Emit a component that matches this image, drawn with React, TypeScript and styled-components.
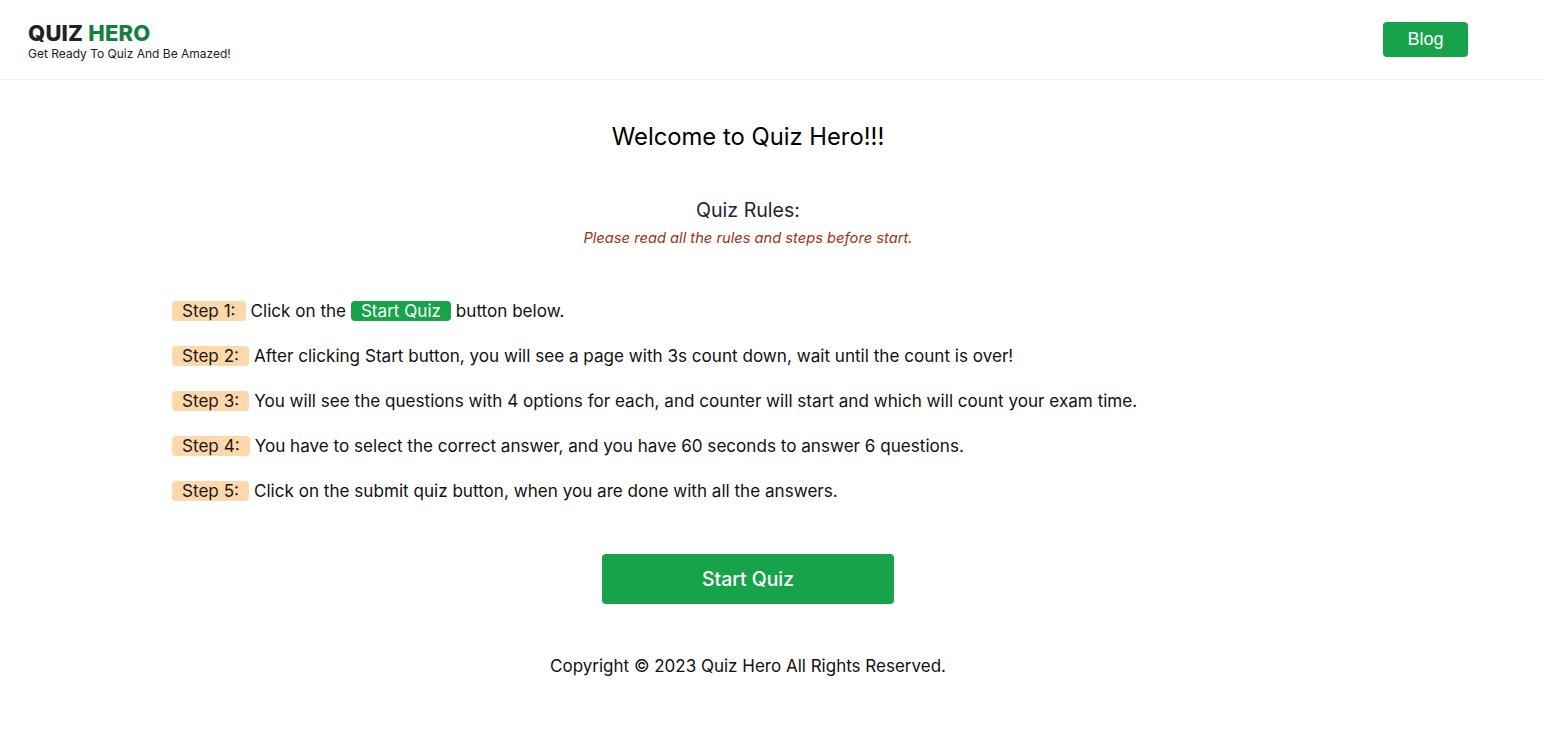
import React from "react";
import styled, { createGlobalStyle } from "styled-components";

const GlobalStyle = createGlobalStyle`
  * { box-sizing: border-box; }
  body {
    margin: 0;
    background: #ffffff;
    font-family: Inter, "Noto Sans", sans-serif;
    color: #111111;
  }
`;

const Header = styled.header`
  display: flex;
  align-items: center;
  justify-content: space-between;
  height: 80px;
  padding: 0 76px 0 28px;
  border-bottom: 1px solid #f0f0f0;
`;

const Brand = styled.div`
  display: flex;
  flex-direction: column;
  gap: 2px;
  padding-top: 2px;
`;

const Logo = styled.h1`
  margin: 0;
  font-size: 22px;
  font-weight: 800;
  line-height: 24px;
  color: #1f2125;
  letter-spacing: 0.2px;
`;

const LogoAccent = styled.span`
  color: #15803d;
`;

const Tagline = styled.p`
  margin: 0;
  font-size: 12px;
  line-height: 14px;
  color: #222;
`;

const BlogButton = styled.a`
  display: flex;
  align-items: center;
  justify-content: center;
  width: 85px;
  height: 35px;
  background: #16a34a;
  color: #fff;
  border-radius: 4px;
  font-family: "Liberation Sans", Arial, sans-serif;
  font-size: 18px;
  text-decoration: none;
`;

const Main = styled.main`
  width: 1152px;
  margin-left: 172px;
  display: flex;
  flex-direction: column;
  padding-top: 42px;
`;

const Title = styled.h2`
  margin: 0;
  text-align: center;
  font-size: 23.8px;
  font-weight: 400;
  line-height: 30px;
  color: #000;
`;

const RulesTitle = styled.h3`
  margin: 46px 0 0;
  text-align: center;
  font-size: 19.6px;
  font-weight: 400;
  line-height: 24px;
  color: #1e2533;
`;

const RulesNote = styled.p`
  margin: 6px 0 0;
  text-align: center;
  font-size: 14.7px;
  font-style: italic;
  line-height: 20px;
  color: #9a3412;
`;

const StepList = styled.ol`
  list-style: none;
  margin: 53px 0 0;
  padding: 0;
  display: flex;
  flex-direction: column;
  gap: 25px;
`;

const StepItem = styled.li`
  display: flex;
  align-items: center;
  gap: 5px;
  font-size: 17.1px;
  line-height: 20px;
  color: #111;
`;

const StepBadge = styled.span`
  display: inline-flex;
  align-items: center;
  height: 20px;
  padding: 0 10px;
  background: #fed7aa;
  border-radius: 4px;
  color: #1a1a1a;
`;

const InlineButton = styled.span`
  display: inline-flex;
  align-items: center;
  height: 20px;
  padding: 0 10px;
  background: #16a34a;
  color: #fff;
  border-radius: 4px;
`;

const StartButton = styled.button`
  align-self: center;
  margin-top: 53px;
  width: 292px;
  height: 50px;
  border: none;
  border-radius: 4px;
  background: #16a34a;
  color: #fff;
  font-family: inherit;
  font-size: 19.4px;
  font-weight: 500;
  cursor: pointer;
`;

const Footer = styled.footer`
  margin-top: 52px;
  text-align: center;
  font-size: 17px;
  line-height: 20px;
  color: #111;
`;

const steps: React.ReactNode[] = [
  <>Click on the <InlineButton>Start Quiz</InlineButton> button below.</>,
  <>After clicking Start button, you will see a page with 3s count down, wait until the count is over!</>,
  <>You will see the questions with 4 options for each, and counter will start and which will count your exam time.</>,
  <>You have to select the correct answer, and you have 60 seconds to answer 6 questions.</>,
  <>Click on the submit quiz button, when you are done with all the answers.</>,
];

export default function App() {
  return (
    <>
      <GlobalStyle />
      <Header>
        <Brand>
          <Logo>
            QUIZ <LogoAccent>HERO</LogoAccent>
          </Logo>
          <Tagline>Get Ready To Quiz And Be Amazed!</Tagline>
        </Brand>
        <BlogButton href="#">Blog</BlogButton>
      </Header>
      <Main>
        <Title>Welcome to Quiz Hero!!!</Title>
        <RulesTitle>Quiz Rules:</RulesTitle>
        <RulesNote>Please read all the rules and steps before start.</RulesNote>
        <StepList>
          {steps.map((s, i) => (
            <StepItem key={i}>
              <StepBadge>Step {i + 1}:</StepBadge>
              <span>{s}</span>
            </StepItem>
          ))}
        </StepList>
        <StartButton>Start Quiz</StartButton>
        <Footer>Copyright © 2023 Quiz Hero All Rights Reserved.</Footer>
      </Main>
    </>
  );
}
